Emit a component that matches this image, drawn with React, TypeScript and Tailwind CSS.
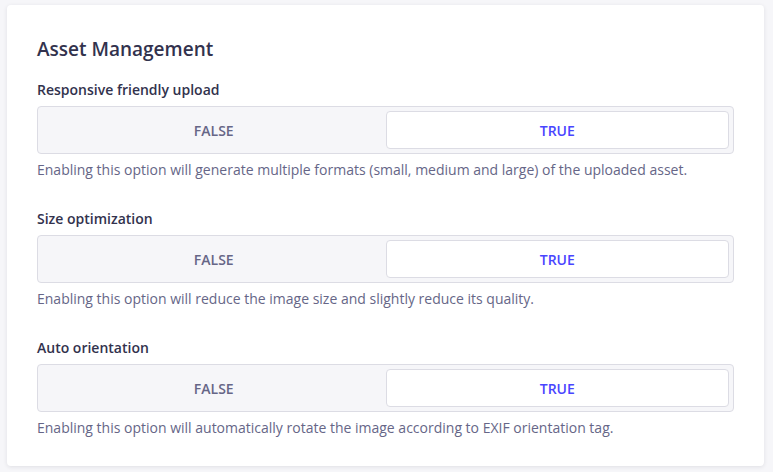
import React, { useState } from 'react'

const SETTINGS = [
  {
    key: 'responsive',
    label: 'Responsive friendly upload',
    hint: 'Enabling this option will generate multiple formats (small, medium and large) of the uploaded asset.',
  },
  {
    key: 'size',
    label: 'Size optimization',
    hint: 'Enabling this option will reduce the image size and slightly reduce its quality.',
  },
  {
    key: 'orientation',
    label: 'Auto orientation',
    hint: 'Enabling this option will automatically rotate the image according to EXIF orientation tag.',
  },
]

export default function App() {
  const [values, setValues] = useState<Record<string, boolean>>({
    responsive: true,
    size: true,
    orientation: true,
  })

  return (
    <div className="h-[472px] bg-[#f6f6f9] pl-[7px] pr-[9px] pt-[5px] font-['Open_Sans',sans-serif]">
      <div className="rounded bg-white px-[30px] pt-[32px] pb-[28px] shadow-[0_1px_4px_rgba(33,33,52,0.1)]">
        <h2 className="text-[19px] leading-[24px] font-semibold text-[#32324d]">Asset Management</h2>
        <div className="mt-[19px] flex flex-col gap-[29px]">
          {SETTINGS.map((s) => (
            <Toggle
              key={s.key}
              label={s.label}
              hint={s.hint}
              value={values[s.key]}
              onChange={(v) => setValues({ ...values, [s.key]: v })}
            />
          ))}
        </div>
      </div>
    </div>
  )
}

function Toggle({ label, hint, value, onChange }: { label: string, hint: string, value: boolean, onChange: (v: boolean) => void }) {
  return (
    <div>
      <label className="block text-[14px] leading-[20px] font-semibold text-[#32324d]">{label}</label>
      <div className="mt-[6px] grid h-[48px] grid-cols-2 rounded border border-[#dcdce4] bg-[#f6f6f9] p-[4px]">
        <button
          onClick={() => onChange(false)}
          className={`rounded text-[14px] font-semibold ${!value ? 'border border-[#dcdce4] bg-white text-[#4945ff]' : 'text-[#666687]'}`}
        >
          FALSE
        </button>
        <button
          onClick={() => onChange(true)}
          className={`rounded text-[14px] font-semibold ${value ? 'border border-[#dcdce4] bg-white text-[#4945ff]' : 'text-[#666687]'}`}
        >
          TRUE
        </button>
      </div>
      <p className="mt-[6px] text-[14px] leading-[20px] text-[#666687]">{hint}</p>
    </div>
  )
}
